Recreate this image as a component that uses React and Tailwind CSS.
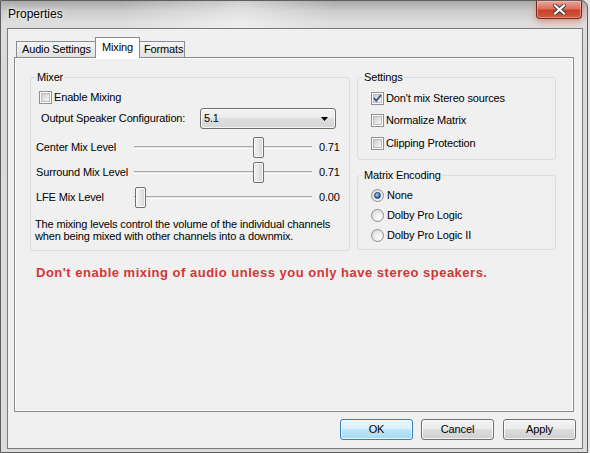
import React from "react";

const Check = ({ checked }) => (
  <span className="relative block w-[13px] h-[13px] shrink-0 border border-[#8e8f8f] bg-white p-[1px]">
    <span className="block w-full h-full border border-[#b9bbbd] bg-[linear-gradient(135deg,#cbcccd,#f8f8f8)]" />
    {checked && (
      <svg className="absolute left-0 top-0" width="11" height="11" viewBox="0 0 11 11">
        <path d="M2 5.2 L4.3 7.8 L9 2" fill="none" stroke="#3b5488" strokeWidth="1.9" />
      </svg>
    )}
  </span>
);

const Radio = ({ selected }) => (
  <span className="flex items-center justify-center w-[13px] h-[13px] shrink-0 rounded-full border border-[#8e8f8f] bg-[radial-gradient(circle_at_65%_70%,#ffffff,#d3d3d3)]">
    {selected && (
      <span className="block w-[7px] h-[7px] rounded-full border border-[#1d3d70] bg-[radial-gradient(circle_at_40%_35%,#b7dcfa,#2a6bb5_60%,#173f78)]" />
    )}
  </span>
);

const Group = ({ label, className, children }) => (
  <div className={"relative border border-[#d5dfe5] rounded-[3px] " + className}>
    <span className="absolute left-[5px] -top-[7px] px-[1px] bg-[#f0f0f0] leading-[13px]">{label}</span>
    {children}
  </div>
);

const SliderRow = ({ label, value }) => (
  <div className="flex items-center h-[21px]">
    <span className="w-[98px] pl-[5px] box-content shrink-0 whitespace-nowrap">{label}</span>
    <div className="relative w-[178px] h-[21px] shrink-0">
      <div className="absolute left-0 right-0 top-[9px] h-[3px] border-t border-[#a9a9a9] border-b border-b-white bg-[#e3e3e3]" />
      <div
        className="absolute top-0 w-[11px] h-[21px] rounded-[2px] border border-[#707070] bg-[linear-gradient(90deg,#f4f4f4,#e6e6e6_50%,#d6d6d6)] shadow-[inset_0_0_0_1px_#fbfbfb]"
        style={{ left: Math.round(1 + value * 166) + "px" }}
      />
    </div>
    <span className="ml-[7px]">{value.toFixed(2)}</span>
  </div>
);

const Button = ({ children, primary, className = "" }) => (
  <div
    className={
      "flex items-center justify-center w-[73px] h-[21px] rounded-[3px] border shadow-[inset_0_0_0_1px_rgba(255,255,255,0.75)] " +
      (primary
        ? "border-[#3c7fb1] bg-[linear-gradient(180deg,#eaf6fd_0%,#d9f0fc_50%,#bee6fd_50%,#a7d9f5_100%)] "
        : "border-[#707070] bg-[linear-gradient(180deg,#f2f2f2_0%,#ebebeb_50%,#dddddd_50%,#cfcfcf_100%)] ") +
      className
    }
  >
    {children}
  </div>
);

export default function App() {
  return (
    <div className="w-[590px] h-[453px] overflow-hidden bg-[#e4e4e4] text-[11px] tracking-[-0.15px] text-black font-['Liberation_Sans',Arial,sans-serif]">
      <div className="relative w-[588px] h-[453px] flex flex-col border border-[#5e5e5e] rounded-tr-[7px] pl-[6px] pr-[4px] pb-[3px] bg-[linear-gradient(180deg,#a9a9a9_0px,#cbcbcb_10px,#dedede_22px,#d9d9d9_60px,#dcdcdc_100%)]">
        {/* glass streaks */}
        <div className="absolute left-[120px] top-0 w-[300px] h-[27px] bg-[linear-gradient(100deg,transparent_0%,rgba(255,255,255,0.45)_40%,transparent_70%)]" />
        {/* title */}
        <div className="relative h-[27px] leading-[27px] pl-[1px] text-[12px] tracking-normal [text-shadow:0_0_6px_#fff,0_0_3px_#fff]">
          Properties
        </div>
        {/* close button */}
        <div className="absolute left-[535px] top-0 w-[46px] h-[18px] rounded-b-[4px] border border-t-0 border-[#6b2b23] bg-[linear-gradient(180deg,#eba596_0%,#d9705f_45%,#c8412b_55%,#d45a3d_100%)] shadow-[0_3px_7px_rgba(215,90,70,0.55),inset_0_0_0_1px_rgba(255,200,190,0.5)] flex items-center justify-center">
          <svg width="13" height="11" viewBox="0 0 13 11">
            <path d="M2 1.5 L11 9.5 M11 1.5 L2 9.5" stroke="#3c3c3c" strokeWidth="4.2" strokeLinecap="square" />
            <path d="M2 1.5 L11 9.5 M11 1.5 L2 9.5" stroke="#ffffff" strokeWidth="2.2" strokeLinecap="square" />
          </svg>
        </div>

        {/* client */}
        <div className="relative flex-1 flex flex-col border border-[#7b7b7b] bg-[#f0f0f0] pl-[6px] pt-[8px]">
          {/* tabs */}
          <div className="flex items-end h-[20px] pl-[2px]">
            <div className="w-[80px] h-[16px] border border-b-0 border-[#898c95] bg-[linear-gradient(180deg,#f4f4f4,#e1e1e1)] pl-[5px] leading-[15px] whitespace-nowrap">
              Audio Settings
            </div>
            <div className="relative z-10 -ml-px w-[45px] h-[21px] -mb-px border border-b-0 border-[#898c95] bg-white pl-[6px] leading-[19px]">
              Mixing
            </div>
            <div className="-ml-px w-[46px] h-[16px] border border-b-0 border-[#898c95] bg-[linear-gradient(180deg,#f4f4f4,#e1e1e1)] pl-[4px] leading-[15px]">
              Formats
            </div>
          </div>
          {/* panel */}
          <div className="w-[560px] h-[355px] border border-[#898c95] bg-[#f0f0f0] shadow-[inset_0_0_0_1px_#ffffff] pl-[15px] pt-[19px]">
            <div className="flex items-start">
              <Group label="Mixer" className="w-[320px] h-[174px]">
                <div className="flex flex-col">
                  <div className="flex items-center h-[13px] mt-[13px] pl-[8px] gap-[2px]">
                    <Check />
                    <span className="leading-[13px]">Enable Mixing</span>
                  </div>
                  <div className="flex items-center h-[21px] mt-[4px] pl-[10px]">
                    <span className="w-[159px] shrink-0 whitespace-nowrap">Output Speaker Configuration:</span>
                    <div className="relative w-[136px] h-[21px] rounded-[3px] border border-[#707070] bg-[linear-gradient(180deg,#f2f2f2_0%,#ebebeb_50%,#dddddd_50%,#d6d6d6_100%)] shadow-[inset_0_0_0_1px_rgba(255,255,255,0.7)] flex items-center pl-[3px]">
                      5.1
                      <svg className="absolute right-[7px] top-[8px]" width="7" height="4" viewBox="0 0 7 4">
                        <path d="M0 0 H7 L3.5 4 Z" fill="#000" />
                      </svg>
                    </div>
                  </div>
                  <div className="flex flex-col gap-[4px] mt-[8px]">
                    <SliderRow label="Center Mix Level" value={0.71} />
                    <SliderRow label="Surround Mix Level" value={0.71} />
                    <SliderRow label="LFE Mix Level" value={0} />
                  </div>
                  <p className="mt-[10px] pl-[4px] leading-[12px] whitespace-nowrap">
                    The mixing levels control the volume of the individual channels
                    <br />
                    when being mixed with other channels into a downmix.
                  </p>
                </div>
              </Group>
              <div className="ml-[7px] flex flex-col">
                <Group label="Settings" className="w-[199px] h-[83px]">
                  <div className="flex flex-col pl-[13px] pt-[14px]">
                    <div className="flex items-center h-[13px] gap-[2px]">
                      <Check checked />
                      <span>Don't mix Stereo sources</span>
                    </div>
                    <div className="flex items-center h-[13px] gap-[2px] mt-[9px]">
                      <Check />
                      <span>Normalize Matrix</span>
                    </div>
                    <div className="flex items-center h-[13px] gap-[2px] mt-[10px]">
                      <Check />
                      <span>Clipping Protection</span>
                    </div>
                  </div>
                </Group>
                <Group label="Matrix Encoding" className="w-[199px] h-[75px] mt-[15px]">
                  <div className="flex flex-col pl-[13px] pt-[13px] gap-[7px]">
                    <div className="flex items-center h-[13px] gap-[3px]">
                      <Radio selected />
                      <span>None</span>
                    </div>
                    <div className="flex items-center h-[13px] gap-[3px]">
                      <Radio />
                      <span>Dolby Pro Logic</span>
                    </div>
                    <div className="flex items-center h-[13px] gap-[3px]">
                      <Radio />
                      <span>Dolby Pro Logic II</span>
                    </div>
                  </div>
                </Group>
              </div>
            </div>
            <p className="mt-[14px] ml-[6px] text-[13px] leading-[16px] font-bold tracking-[0.5px] text-[#d93434] whitespace-nowrap">
              Don't enable mixing of audio unless you only have stereo speakers.
            </p>
          </div>
          {/* buttons */}
          <div className="flex justify-end mt-[7px] pr-[6px]">
            <Button primary>OK</Button>
            <Button className="ml-[8px]">Cancel</Button>
            <Button className="ml-[9px]">Apply</Button>
          </div>
        </div>
      </div>
    </div>
  );
}
